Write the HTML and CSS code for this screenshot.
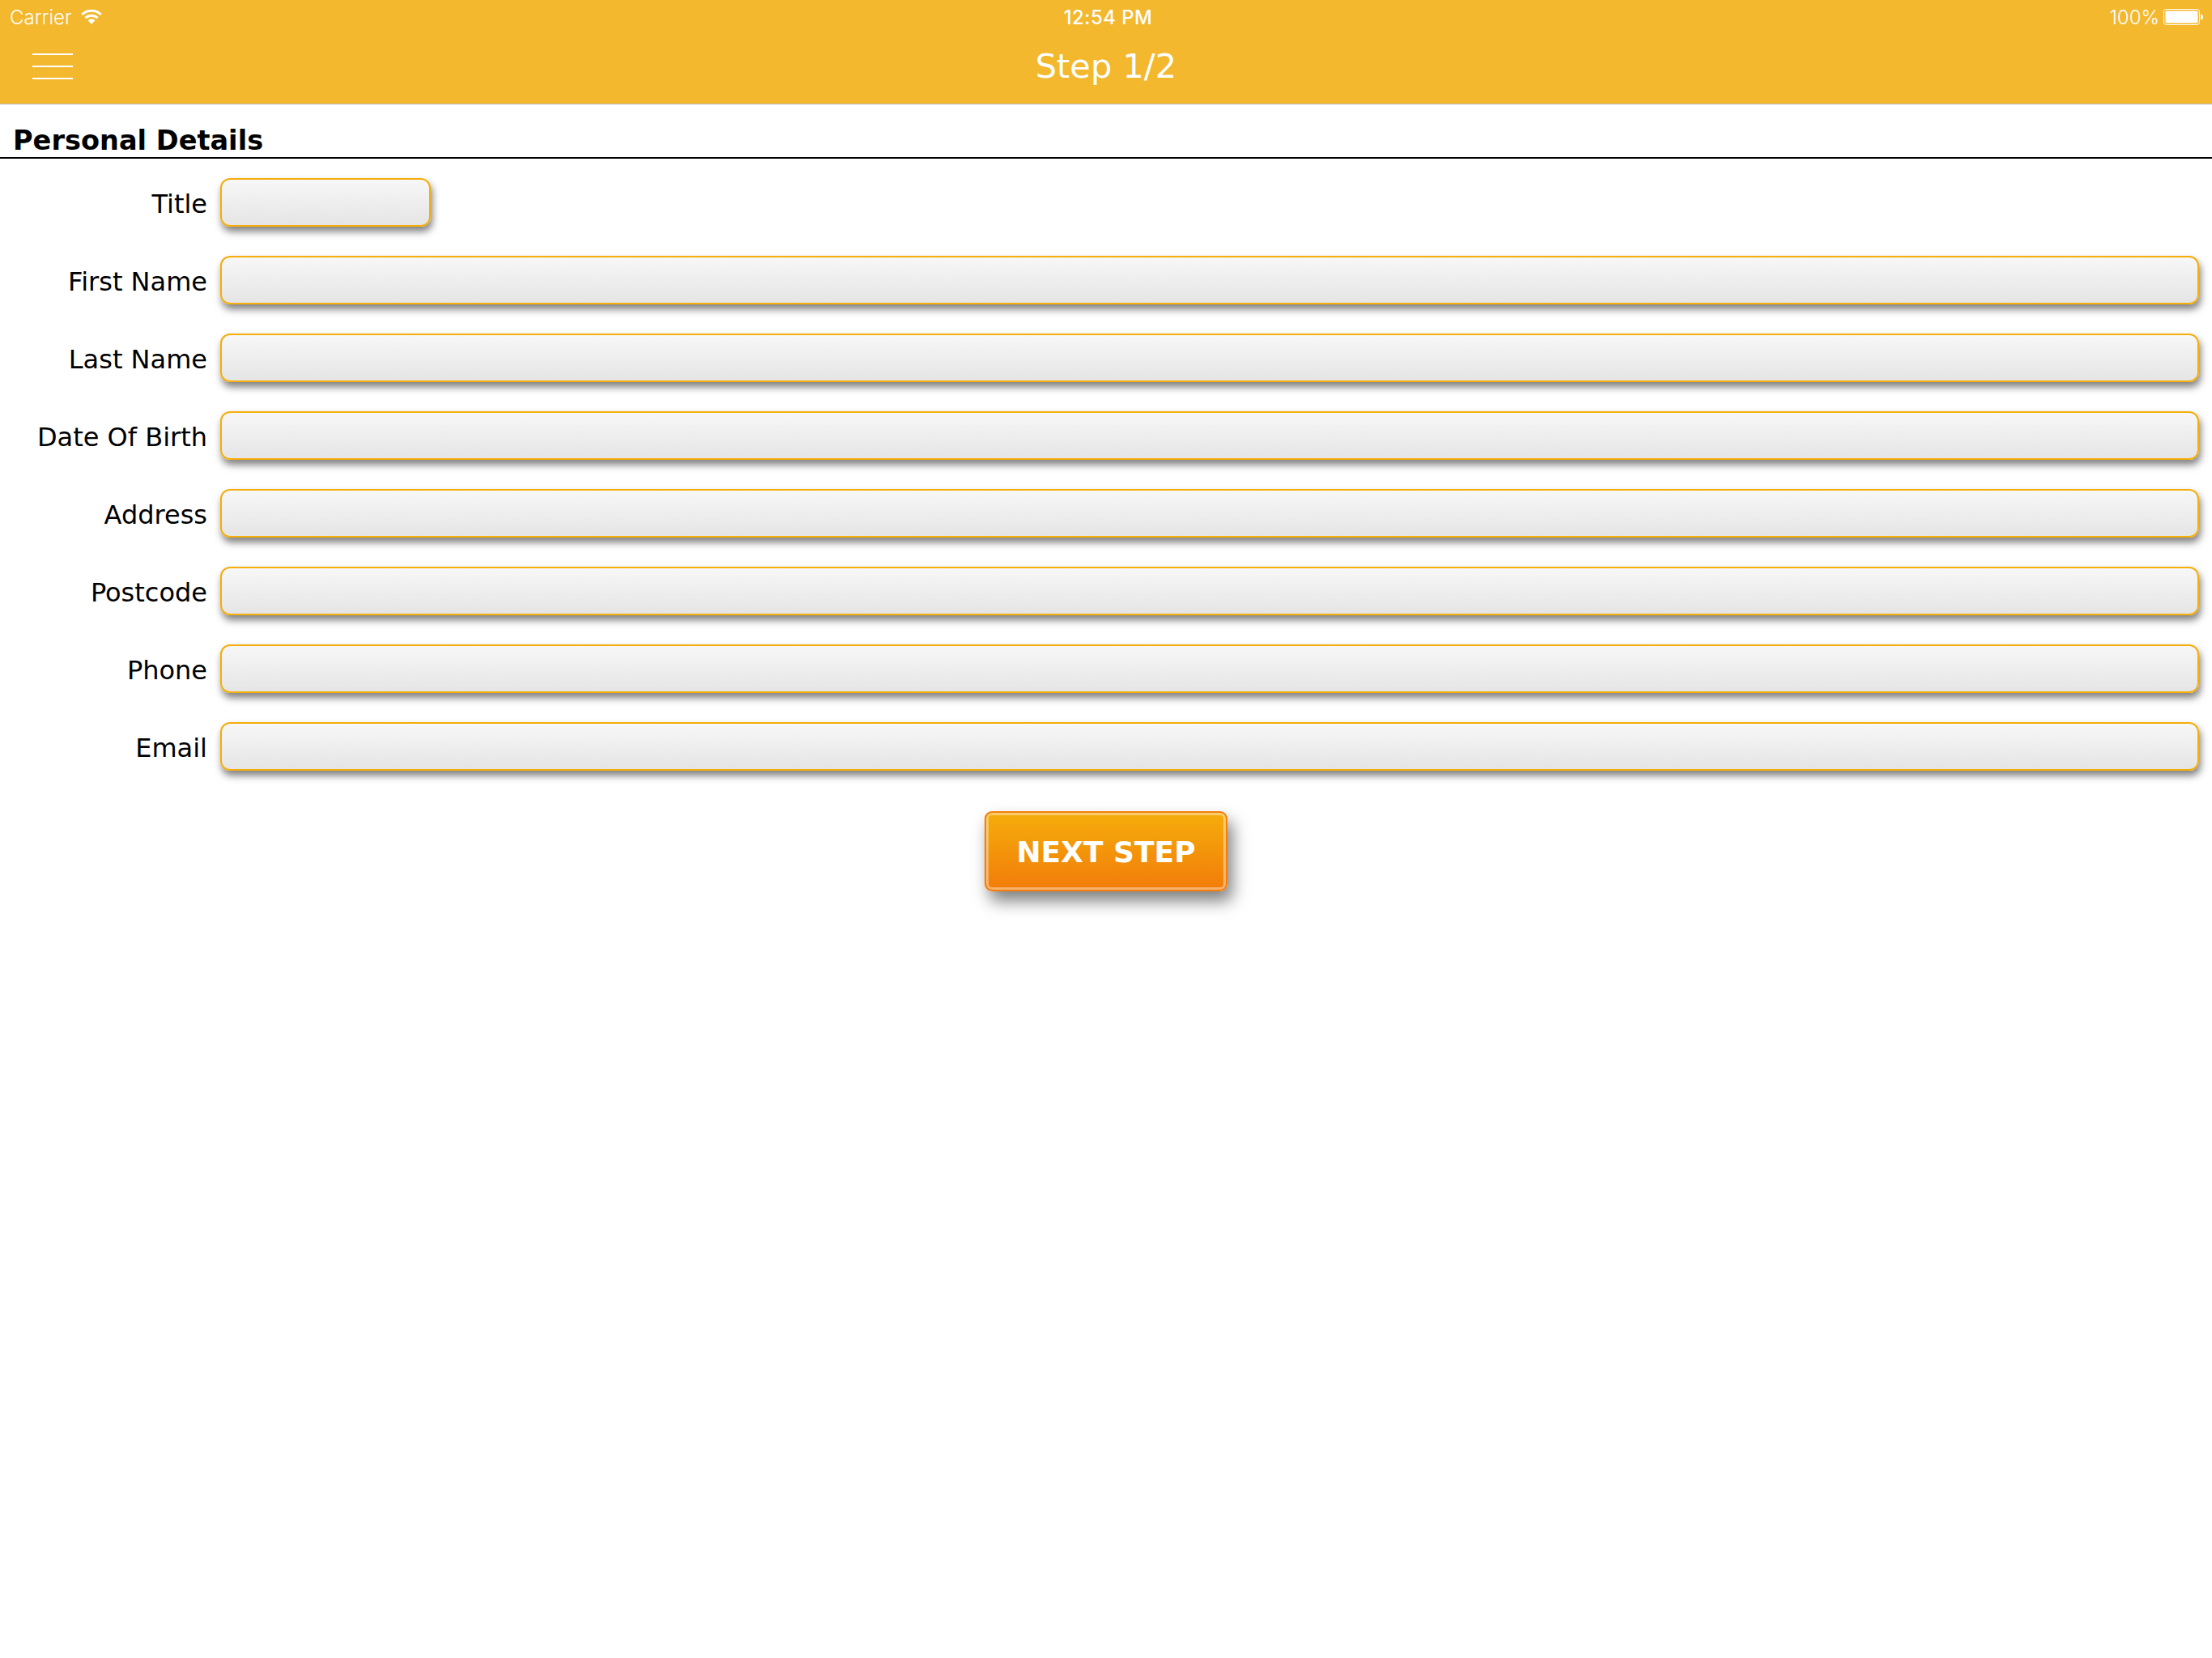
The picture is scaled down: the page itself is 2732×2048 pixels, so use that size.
FILE: index.html
```html
<!DOCTYPE html>
<html lang="en">
<head>
  <meta charset="UTF-8">
  <meta name="viewport" content="width=device-width, initial-scale=1.0">
  <title>Step 1/2</title>
  <link rel="stylesheet" href="styles.css">
</head>
<body>
  <header class="header">
    <div class="status-bar">
      <div class="status-left">
        <span>Carrier</span>
        <svg class="wifi" width="26" height="20" viewBox="0 0 26 20">
          <path d="M1.2 7a17 17 0 0 1 23.6 0" fill="none" stroke="#fff" stroke-width="3"/>
          <path d="M5.4 11.2a11 11 0 0 1 15.2 0" fill="none" stroke="#fff" stroke-width="3"/>
          <path d="M8.6 14.2a6.2 6.2 0 0 1 8.8 0L13 19z" fill="#fff"/>
        </svg>
      </div>
      <div class="status-time">12:54 PM</div>
      <div class="status-right">
        <span>100%</span>
        <svg class="battery" width="49" height="20" viewBox="0 0 49 20">
          <rect x="0.5" y="0.5" width="44" height="19" rx="3" fill="none" stroke="#fff" stroke-width="1"/>
          <rect x="2.5" y="2.5" width="40" height="15" rx="1.5" fill="#fff"/>
          <path d="M46 6.5c2 0 3 1.4 3 3.5s-1 3.5-3 3.5z" fill="#fff"/>
        </svg>
      </div>
    </div>
    <div class="nav-bar">
      <div class="menu-icon"><span></span><span></span><span></span></div>
      <div class="nav-title">Step 1/2</div>
    </div>
  </header>

  <main class="content">
    <h2 class="section-title">Personal Details</h2>
    <form class="details-form">
      <div class="form-row"><label>Title</label><div class="field field-short"></div></div>
      <div class="form-row"><label>First Name</label><div class="field"></div></div>
      <div class="form-row"><label>Last Name</label><div class="field"></div></div>
      <div class="form-row"><label>Date Of Birth</label><div class="field"></div></div>
      <div class="form-row"><label>Address</label><div class="field"></div></div>
      <div class="form-row"><label>Postcode</label><div class="field"></div></div>
      <div class="form-row"><label>Phone</label><div class="field"></div></div>
      <div class="form-row"><label>Email</label><div class="field"></div></div>
    </form>
    <div class="actions">
      <div class="next-button">NEXT STEP</div>
    </div>
  </main>
</body>
</html>
```

FILE: styles.css
```css
body {
  margin: 0;
  height: 2048px;
  background: #fff;
  color: #000;
  font-family: "DejaVu Sans", Verdana, sans-serif;
  overflow: hidden;
}
.header {
  height: 129px;
  background: #f3b82e;
  color: #fff;
  box-sizing: border-box;
  border-bottom: 1px solid #b8b8b8;
}
.status-bar {
  height: 40px;
  box-sizing: border-box;
  padding: 2px 11px 0 12px;
  display: grid;
  grid-template-columns: 1fr auto 1fr;
  align-items: center;
  font-family: Inter, "Liberation Sans", sans-serif;
  font-size: 24px;
  font-weight: 300;
}
.status-left {
  display: flex;
  align-items: center;
  gap: 11px;
}
.status-time {
  font-weight: 500;
  letter-spacing: 0.4px;
  padding-left: 4px;
}
.status-right {
  display: flex;
  justify-content: flex-end;
  align-items: center;
  gap: 5px;
}
.nav-bar {
  height: 88px;
  position: relative;
  display: flex;
  justify-content: center;
  align-items: center;
  padding-bottom: 6px;
  box-sizing: border-box;
}
.menu-icon {
  position: absolute;
  left: 40px;
  top: 26px;
  width: 50px;
  display: flex;
  flex-direction: column;
  gap: 13px;
}
.menu-icon span {
  height: 2px;
  background: #fff;
}
.nav-title {
  font-size: 41.5px;
}
.section-title {
  margin: 0;
  height: 67px;
  box-sizing: border-box;
  padding: 25px 0 0 16px;
  border-bottom: 2px solid #000;
  font-size: 33.6px;
  line-height: 40px;
  font-weight: bold;
}
.details-form {
  padding: 24px 16px 0 0;
  display: flex;
  flex-direction: column;
  gap: 36px;
}
.form-row {
  display: flex;
  align-items: center;
  gap: 16px;
  height: 60px;
}
.form-row label {
  width: 256px;
  padding-top: 4px;
  text-align: right;
  font-size: 32px;
}
.field {
  flex: 1;
  height: 60px;
  box-sizing: border-box;
  border: 2.5px solid #f5ae0a;
  border-radius: 12px;
  background: linear-gradient(#f7f7f7, #e5e5e5);
  box-shadow: 2px 6px 10px rgba(0, 0, 0, 0.5);
}
.field-short {
  flex: none;
  width: 260px;
}
.actions {
  display: flex;
  justify-content: center;
  padding-top: 50px;
}
.next-button {
  width: 300px;
  height: 99px;
  box-sizing: border-box;
  padding-top: 2px;
  display: flex;
  justify-content: center;
  align-items: center;
  border: 2px solid #f57f0a;
  border-radius: 9px;
  background: linear-gradient(#f5ad0b, #f27c0a);
  box-shadow: inset 0 0 0 3px rgba(255, 255, 255, 0.4), 6px 12px 20px rgba(0, 0, 0, 0.5);
  color: #fff;
  font-size: 36px;
  font-weight: bold;
}
```
